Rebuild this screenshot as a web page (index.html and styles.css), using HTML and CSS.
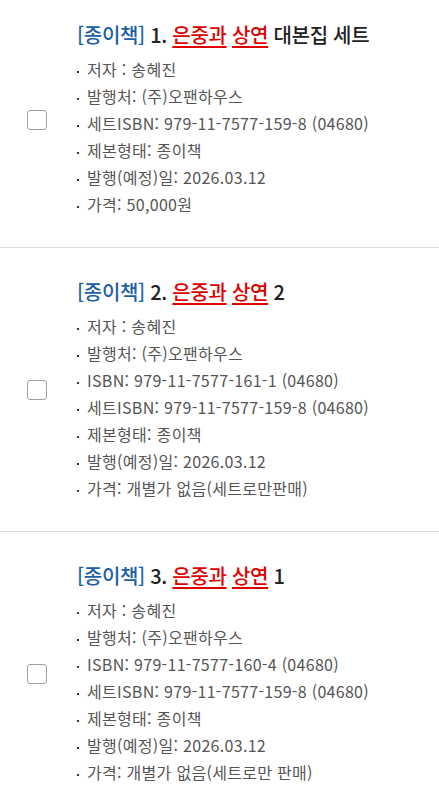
FILE: index.html
```html
<!DOCTYPE html>
<html lang="ko">
<head>
<meta charset="utf-8">
<link rel="stylesheet" href="styles.css">
</head>
<body>
<div class="list">
  <div class="item">
    <div class="check"><input type="checkbox" class="cb"></div>
    <div class="info">
      <div class="title"><span class="type">[종이책]</span> 1. <span class="hl">은중과</span> <span class="hl">상연</span> 대본집 세트</div>
      <ul class="meta">
        <li>저자 : 송혜진</li>
        <li>발행처: (주)오팬하우스</li>
        <li>세트ISBN: 979-11-7577-159-8 (04680)</li>
        <li>제본형태: 종이책</li>
        <li>발행(예정)일: 2026.03.12</li>
        <li>가격: 50,000원</li>
      </ul>
    </div>
  </div>
  <div class="item">
    <div class="check"><input type="checkbox" class="cb"></div>
    <div class="info">
      <div class="title"><span class="type">[종이책]</span> 2. <span class="hl">은중과</span> <span class="hl">상연</span> 2</div>
      <ul class="meta">
        <li>저자 : 송혜진</li>
        <li>발행처: (주)오팬하우스</li>
        <li>ISBN: 979-11-7577-161-1 (04680)</li>
        <li>세트ISBN: 979-11-7577-159-8 (04680)</li>
        <li>제본형태: 종이책</li>
        <li>발행(예정)일: 2026.03.12</li>
        <li>가격: 개별가 없음(세트로만판매)</li>
      </ul>
    </div>
  </div>
  <div class="item">
    <div class="check"><input type="checkbox" class="cb"></div>
    <div class="info">
      <div class="title"><span class="type">[종이책]</span> 3. <span class="hl">은중과</span> <span class="hl">상연</span> 1</div>
      <ul class="meta">
        <li>저자 : 송혜진</li>
        <li>발행처: (주)오팬하우스</li>
        <li>ISBN: 979-11-7577-160-4 (04680)</li>
        <li>세트ISBN: 979-11-7577-159-8 (04680)</li>
        <li>제본형태: 종이책</li>
        <li>발행(예정)일: 2026.03.12</li>
        <li>가격: 개별가 없음(세트로만 판매)</li>
      </ul>
    </div>
  </div>
</div>
</body>
</html>
```
FILE: styles.css
```css
html, body {
  margin: 0;
  padding: 0;
  background: #fff;
}
body {
  font-family: "Noto Sans CJK KR", "Noto Sans", sans-serif;
  color: #555;
  overflow: hidden;
}
.list {
  margin-top: -9px;
}
.item {
  display: flex;
  align-items: center;
  padding: 30px 0 29px 27px;
  border-bottom: 1px solid #dcdcdc;
}
.check {
  width: 50px;
  flex: none;
  display: flex;
}
.cb {
  appearance: none;
  -webkit-appearance: none;
  margin: 0;
  width: 20px;
  height: 20px;
  border: 1px solid #a0a0a0;
  border-radius: 3px;
  background: #fff;
  box-sizing: border-box;
}
.info {
  flex: 1;
}
.title {
  font-size: 20px;
  line-height: 27px;
  font-weight: 500;
  color: #222;
  letter-spacing: -0.3px;
  margin-bottom: 8px;
}
.type {
  color: #1c5fa8;
}
.hl {
  color: #e00000;
  text-decoration: underline;
  text-underline-offset: 3px;
}
.meta {
  list-style: none;
  margin: 0;
  padding: 0;
}
.meta li {
  font-size: 16px;
  line-height: 27px;
  color: #555;
  letter-spacing: 0.3px;
}
.meta li::before {
  content: "";
  display: inline-block;
  width: 2px;
  height: 2px;
  background: #333;
  vertical-align: middle;
  margin-right: 8px;
}
```
